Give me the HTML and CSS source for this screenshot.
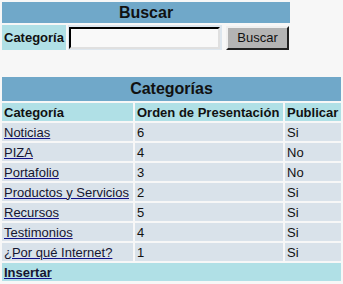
FILE: index.html
```html
<!DOCTYPE html>
<html>
<head>
<meta charset="utf-8">
<link rel="stylesheet" href="styles.css">
</head>
<body>
<table class="search" cellspacing="2">
  <tr><td colspan="3" class="title">Buscar</td></tr>
  <tr>
    <td class="label">Categoría</td>
    <td class="field"><input type="text" class="txt"></td>
    <td class="btncell"><button class="btn">Buscar</button></td>
  </tr>
</table>
<table class="list" cellspacing="2">
  <tr><td colspan="3" class="title">Categorías</td></tr>
  <tr class="head">
    <td class="c1">Categoría</td>
    <td class="c2">Orden de Presentación</td>
    <td class="c3">Publicar</td>
  </tr>
  <tr class="row"><td><a href="#">Noticias</a></td><td>6</td><td>Si</td></tr>
  <tr class="row"><td><a href="#">PIZA</a></td><td>4</td><td>No</td></tr>
  <tr class="row"><td><a href="#">Portafolio</a></td><td>3</td><td>No</td></tr>
  <tr class="row"><td><a href="#">Productos y Servicios</a></td><td>2</td><td>Si</td></tr>
  <tr class="row"><td><a href="#">Recursos</a></td><td>5</td><td>Si</td></tr>
  <tr class="row"><td><a href="#">Testimonios</a></td><td>4</td><td>Si</td></tr>
  <tr class="row"><td><a href="#">¿Por qué Internet?</a></td><td>1</td><td>Si</td></tr>
  <tr class="foot"><td colspan="3"><a href="#">Insertar</a></td></tr>
</table>
</body>
</html>
```
FILE: styles.css
```css
html, body {
  margin: 0;
  padding: 0;
  background: #f7f7f7;
  font-family: "Liberation Sans", Arial, sans-serif;
  font-size: 13px;
  color: #111;
}
table {
  border-collapse: separate;
  border-spacing: 2px;
}
td {
  padding: 0 2px;
}
.search {
  width: 292px;
}
.title {
  background: #70a8c9;
  text-align: center;
  font-weight: bold;
  font-size: 16px;
  color: #111;
}
.search .title {
  height: 21px;
}
.label {
  background: #b0e0e6;
  font-weight: bold;
  height: 25px;
  width: 60px;
}
.field {
  background: #dde6ee;
  padding: 0 1px;
  width: 152px;
}
.txt {
  box-sizing: border-box;
  width: 151px;
  height: 22px;
  margin: 0;
  display: block;
  background: #f9f9f9;
  border: 2px inset #888;
  border-color: #404040 #e0e0e0 #e0e0e0 #404040;
}
.btncell {
  padding: 0 0 0 2px;
}
.btn {
  box-sizing: border-box;
  width: 63px;
  height: 24px;
  margin: 0;
  background: #b4b4b4;
  border: 2px solid;
  border-color: #f0f0f0 #202020 #202020 #f0f0f0;
  font-family: "Liberation Sans", Arial, sans-serif;
  font-size: 13px;
  color: #111;
  padding: 0;
}
.list {
  width: 343px;
  margin-top: 23px;
}
.list .title {
  height: 24px;
}
.head td {
  background: #b0e0e6;
  font-weight: bold;
  height: 18px;
}
.c1 { width: 127px; }
.c2 { width: 144px; }
.row td {
  background: #d9e2ea;
  height: 18px;
}
.foot td {
  background: #b0e0e6;
  font-weight: bold;
  height: 18px;
}
a {
  color: #151530;
  text-decoration: underline;
  text-decoration-color: #10108a;
}
```
